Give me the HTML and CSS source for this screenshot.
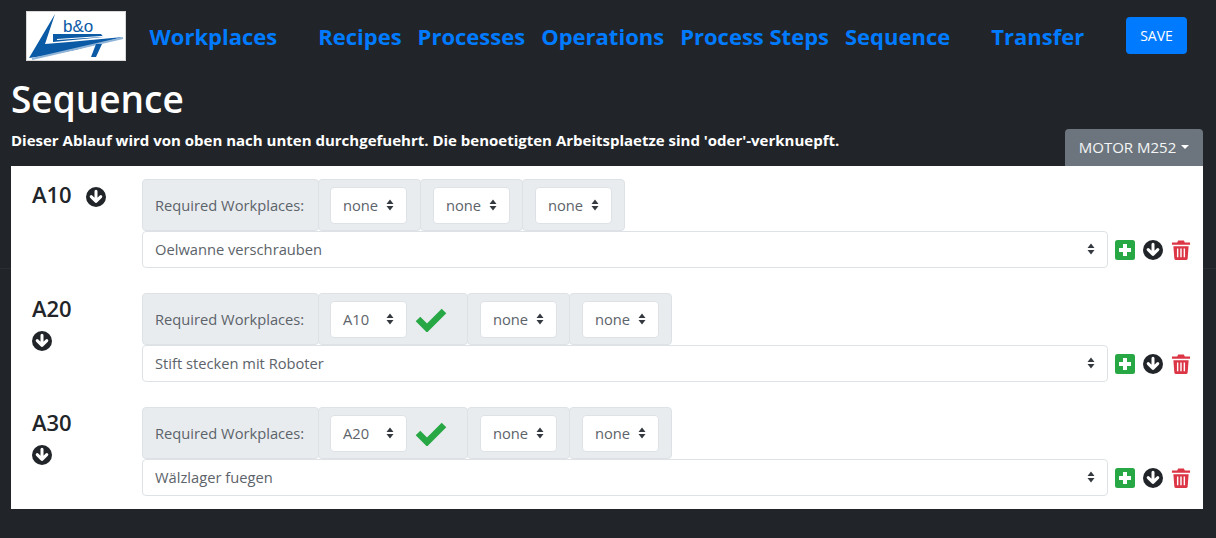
FILE: index.html
```html
<!DOCTYPE html>
<html lang="de">
<head>
<meta charset="utf-8">
<title>Sequence</title>
<link rel="stylesheet" href="styles.css">
</head>
<body>
<svg class="sprites" width="0" height="0" aria-hidden="true">
  <symbol id="i-down" viewBox="0 0 20 20">
    <circle cx="10" cy="10" r="10" fill="#212529"/>
    <path d="M10 4.2v10M5.2 9.6l4.8 4.8 4.8-4.8" fill="none" stroke="#fff" stroke-width="3" stroke-linecap="round" stroke-linejoin="round"/>
  </symbol>
  <symbol id="i-plus" viewBox="0 0 20 20">
    <rect width="20" height="20" rx="2.5" fill="#28a745"/>
    <path d="M10 4v12M4 10h12" stroke="#fff" stroke-width="4"/>
  </symbol>
  <symbol id="i-trash" viewBox="0 0 20 21">
    <path d="M7 0.5h6l1 2h5.5v2.5H0.5V2.5H6z" fill="#dc3545"/>
    <path d="M2 6.5h16l-1 13a1.5 1.5 0 0 1-1.5 1.5h-11A1.5 1.5 0 0 1 3 19.5z" fill="#dc3545"/>
    <path d="M6.5 9v9M10 9v9M13.5 9v9" stroke="#fff" stroke-width="1.5"/>
  </symbol>
  <symbol id="i-check" viewBox="0 0 32 25">
    <path d="M3 12l9 9L29 4" fill="none" stroke="#28a745" stroke-width="6.5"/>
  </symbol>
  <symbol id="i-updown" viewBox="0 0 8 12">
    <path d="M4 0.5L7.5 5H0.5zM4 11.5L0.5 7h7z" fill="#343a40"/>
  </symbol>
</svg>

<header class="navbar">
  <div class="logo">
    <svg viewBox="0 0 98 48" width="98" height="48" aria-hidden="true">
      <path d="M28 2L2 46 L16 44 L48 38 L96 25 L42 30 L18 32z" fill="#0b5aa6"/>
      <path d="M26 22h48l2.5 3-50.500 5z" fill="#0b5aa6"/>
      <path d="M30 27.500L96 23" stroke="#fff" stroke-width="1.200" fill="none"/>
      <path d="M5 47L96 26" stroke="#8fb4d8" stroke-width="2" fill="none"/>
      <path d="M69 32h6l-6 13h-5z" fill="#0b5aa6"/>
      <text x="36" y="20" class="logo-text">b&amp;o</text>
    </svg>
  </div>
  <nav class="nav">
    <a class="nav-link nav-link--wide" href="#">Workplaces</a>
    <a class="nav-link" href="#">Recipes</a>
    <a class="nav-link" href="#">Processes</a>
    <a class="nav-link" href="#">Operations</a>
    <a class="nav-link" href="#">Process Steps</a>
    <a class="nav-link nav-link--wide" href="#">Sequence</a>
    <a class="nav-link" href="#">Transfer</a>
  </nav>
  <button class="btn-save" type="button">SAVE</button>
</header>

<main class="content">
  <h1 class="title">Sequence</h1>
  <div class="intro">
    <p class="hint">Dieser Ablauf wird von oben nach unten durchgefuehrt. Die benoetigten Arbeitsplaetze sind 'oder'-verknuepft.</p>
    <button class="btn-motor" type="button">MOTOR M252<span class="caret"></span></button>
  </div>

  <section class="card">
    <article class="row">
      <div class="head">
        <span class="code">A10</span>
        <svg class="icon icon--down"><use href="#i-down"/></svg>
      </div>
      <div class="fields">
        <div class="group">
          <span class="cell cell--label">Required Workplaces:</span>
          <span class="cell"><span class="mini">none<svg class="updown"><use href="#i-updown"/></svg></span></span>
          <span class="cell"><span class="mini">none<svg class="updown"><use href="#i-updown"/></svg></span></span>
          <span class="cell"><span class="mini">none<svg class="updown"><use href="#i-updown"/></svg></span></span>
        </div>
        <div class="line">
          <span class="wide-select">Oelwanne verschrauben<svg class="updown"><use href="#i-updown"/></svg></span>
          <span class="actions">
            <svg class="icon"><use href="#i-plus"/></svg>
            <svg class="icon"><use href="#i-down"/></svg>
            <svg class="icon"><use href="#i-trash"/></svg>
          </span>
        </div>
      </div>
    </article>

    <article class="row">
      <div class="head head--stacked">
        <span class="code">A20</span>
        <svg class="icon icon--down"><use href="#i-down"/></svg>
      </div>
      <div class="fields">
        <div class="group">
          <span class="cell cell--label">Required Workplaces:</span>
          <span class="cell"><span class="mini">A10<svg class="updown"><use href="#i-updown"/></svg></span><svg class="check"><use href="#i-check"/></svg></span>
          <span class="cell"><span class="mini">none<svg class="updown"><use href="#i-updown"/></svg></span></span>
          <span class="cell"><span class="mini">none<svg class="updown"><use href="#i-updown"/></svg></span></span>
        </div>
        <div class="line">
          <span class="wide-select">Stift stecken mit Roboter<svg class="updown"><use href="#i-updown"/></svg></span>
          <span class="actions">
            <svg class="icon"><use href="#i-plus"/></svg>
            <svg class="icon"><use href="#i-down"/></svg>
            <svg class="icon"><use href="#i-trash"/></svg>
          </span>
        </div>
      </div>
    </article>

    <article class="row">
      <div class="head head--stacked">
        <span class="code">A30</span>
        <svg class="icon icon--down"><use href="#i-down"/></svg>
      </div>
      <div class="fields">
        <div class="group">
          <span class="cell cell--label">Required Workplaces:</span>
          <span class="cell"><span class="mini">A20<svg class="updown"><use href="#i-updown"/></svg></span><svg class="check"><use href="#i-check"/></svg></span>
          <span class="cell"><span class="mini">none<svg class="updown"><use href="#i-updown"/></svg></span></span>
          <span class="cell"><span class="mini">none<svg class="updown"><use href="#i-updown"/></svg></span></span>
        </div>
        <div class="line">
          <span class="wide-select">Wälzlager fuegen<svg class="updown"><use href="#i-updown"/></svg></span>
          <span class="actions">
            <svg class="icon"><use href="#i-plus"/></svg>
            <svg class="icon"><use href="#i-down"/></svg>
            <svg class="icon"><use href="#i-trash"/></svg>
          </span>
        </div>
      </div>
    </article>
  </section>
</main>
</body>
</html>
```
FILE: styles.css
```css
* { box-sizing: border-box; }
html, body { height: 100%; }
body {
  margin: 0;
  overflow: hidden;
  background: #212529 linear-gradient(#2b2f34, #2b2f34) 0 268px / 100% 1px no-repeat;
  font-family: "Open Sans", "Noto Sans", sans-serif;
  color: #212529;
}
.sprites { position: absolute; }

.navbar {
  display: flex;
  align-items: flex-start;
  height: 72px;
  padding: 11px 29px 0 26px;
}
.logo {
  flex: none;
  width: 100px;
  height: 50px;
  background: #fff;
  border: 1px solid #d8d8d8;
}
.logo svg { display: block; }
.logo-text { font: 17px "Liberation Sans", sans-serif; fill: #0b5aa6; }
.nav {
  flex: 1;
  display: flex;
  align-items: center;
  height: 50px;
  padding-left: 15px;
}
.nav-link {
  padding: 0 8px;
  color: #007bff;
  font-size: 22px;
  font-weight: 700;
  text-decoration: none;
  white-space: nowrap;
}
.nav-link:first-child { margin-left: 0.5px; }
.nav-link--wide { margin-right: 25px; }
.btn-save {
  flex: none;
  width: 61px;
  height: 37px;
  margin-top: 6px;
  border: 0;
  border-radius: 4px;
  background: #007bff;
  color: #fff;
  font: 14px "Open Sans", sans-serif;
}

.content { padding: 0 13px 0 11px; }
.title {
  margin: 3px 0 1px;
  color: #fff;
  font-size: 37px;
  font-weight: 600;
  line-height: 48px;
}
.intro {
  display: flex;
  justify-content: space-between;
  align-items: flex-end;
  height: 42px;
}
.hint {
  margin: 0 0 16px;
  color: #fff;
  font-size: 15px;
  font-weight: 700;
  line-height: 20px;
  white-space: nowrap;
}
.btn-motor {
  display: flex;
  align-items: center;
  justify-content: center;
  width: 138px;
  height: 37px;
  padding: 0 0 2px;
  border: 0;
  border-radius: 4px 4px 0 0;
  background: #6c757d;
  color: #f4f5f6;
  font: 15px "Open Sans", sans-serif;
}
.caret {
  margin-left: 5px;
  border-top: 4.5px solid #fff;
  border-left: 4.5px solid transparent;
  border-right: 4.5px solid transparent;
}

.card {
  height: 343px;
  padding-top: 13px;
  background: #fff;
}
.row {
  display: flex;
  height: 114px;
}
.head {
  flex: none;
  display: flex;
  align-items: flex-start;
  gap: 14px;
  width: 131px;
  padding-left: 21px;
}
.head--stacked {
  flex-direction: column;
  gap: 8px;
}
.code {
  font-size: 22px;
  font-weight: 600;
  line-height: 30px;
}
.icon {
  flex: none;
  display: block;
  width: 20px;
  height: 20px;
}
.icon--down { margin-top: 8px; }
.head--stacked .icon--down { margin-top: 0; }

.fields { flex: none; width: 1050px; }
.group { display: flex; height: 52px; }
.cell {
  display: flex;
  align-items: center;
  gap: 8px;
  padding: 0 12px;
  margin-left: -1px;
  background: #e9ecef;
  border: 1px solid #dee2e6;
  border-radius: 4px;
}
.cell--label {
  width: 177px;
  margin-left: 0;
  color: #5c636a;
  font-size: 14.700px;
  white-space: nowrap;
}
.cell--label + .cell { padding: 0 13px 0 11px; }
.mini {
  display: flex;
  align-items: center;
  justify-content: space-between;
  width: 77px;
  height: 37px;
  padding: 0 12px;
  background: #fff;
  border: 1px solid #dee2e6;
  border-radius: 4px;
  color: #5c636a;
  font-size: 14.700px;
}
.updown { flex: none; width: 8px; height: 12px; }
.check { flex: none; width: 32px; height: 25px; margin-right: 7px; }

.line { display: flex; align-items: center; }
.wide-select {
  display: flex;
  align-items: center;
  justify-content: space-between;
  flex: none;
  width: 966px;
  height: 37px;
  padding: 0 12px 2px;
  background: #fff;
  border: 1px solid #dee2e6;
  border-radius: 4px;
  color: #5c636a;
  font-size: 14.700px;
}
.actions {
  display: flex;
  gap: 8px;
  padding-left: 7px;
}
```
